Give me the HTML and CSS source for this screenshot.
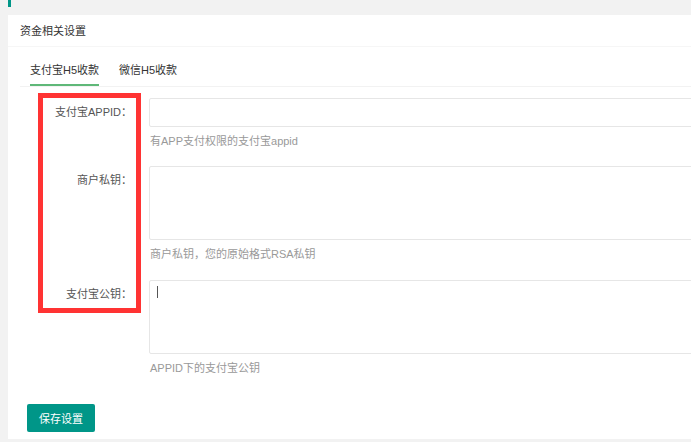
FILE: index.html
```html
<!DOCTYPE html>
<html lang="zh-CN">
<head>
    <meta charset="UTF-8">
    <meta name="viewport" content="width=device-width, initial-scale=1.0">
    <title>资金相关设置</title>
    <link rel="stylesheet" href="styles.css">
</head>
<body>

<div class="quote-edge"></div>

<div class="card">
    <div class="card-header">资金相关设置</div>

    <div class="card-body">
        <ul class="tab-title">
            <li class="tab-this">支付宝H5收款</li>
            <li>微信H5收款</li>
        </ul>

        <form class="form">
            <div class="form-item">
                <label class="form-label">支付宝APPID：</label>
                <div class="input-block">
                    <input type="text" class="input">
                    <div class="form-mid">有APP支付权限的支付宝appid</div>
                </div>
            </div>

            <div class="form-item">
                <label class="form-label">商户私钥：</label>
                <div class="input-block">
                    <textarea class="textarea"></textarea>
                    <div class="form-mid">商户私钥，您的原始格式RSA私钥</div>
                </div>
            </div>

            <div class="form-item">
                <label class="form-label">支付宝公钥：</label>
                <div class="input-block">
                    <div class="textarea-wrap">
                        <textarea class="textarea"></textarea>
                        <span class="caret"></span>
                    </div>
                    <div class="form-mid">APPID下的支付宝公钥</div>
                </div>
            </div>

            <button type="button" class="btn">保存设置</button>
        </form>
    </div>

    <!-- annotation box drawn over the labels -->
    <div class="mark"></div>
</div>

</body>
</html>
```

FILE: styles.css
```css
html, body {
    overflow: hidden;
}

body {
    margin: 0;
    background-color: #f2f2f2;
    font-family: "Liberation Sans", "Noto Sans CJK SC", sans-serif;
    font-size: 11px;
    color: #333;
}

.quote-edge {
    width: 3px;
    height: 7px;
    margin-left: 8px;
    background-color: #009688;
}

.card {
    position: relative;
    margin: 8px -40px 0 8px;
    background: #fff;
    height: 424px;
}

.card-header {
    height: 32px;
    line-height: 33px;
    padding-left: 12px;
    border-bottom: 1px solid #f6f6f6;
    box-sizing: border-box;
    color: #333;
}

.card-body {
    padding: 8px 0 0 12px;
}

.tab-title {
    list-style: none;
    margin: 0;
    padding: 0 0 0 10px;
    height: 31px;
    border-bottom: 1px solid #f2f2f2;
    display: flex;
    gap: 20px;
}

.tab-title li {
    line-height: 31px;
    height: 31px;
    box-sizing: border-box;
    color: #333;
}

.tab-title .tab-this {
    border-bottom: 2px solid #5fb878;
}

.form {
    padding-top: 11px;
}

.form-item {
    display: flex;
    margin-bottom: 17px;
}

.form-item + .form-item {
    margin-bottom: 18px;
}

.form-label {
    width: 129px;
    box-sizing: border-box;
    padding-right: 17px;
    text-align: right;
    line-height: 29px;
    color: #555;
}

.input-block {
    flex: 1;
}

.input,
.textarea {
    display: block;
    width: 100%;
    box-sizing: border-box;
    border: 1px solid #e6e6e6;
    border-radius: 2px;
    background: #fff;
    margin: 0;
    outline: none;
    font: inherit;
}

.input {
    height: 29px;
}

.textarea {
    height: 74px;
    resize: none;
}

.textarea-wrap {
    position: relative;
}

.caret {
    position: absolute;
    left: 8px;
    top: 6px;
    width: 1px;
    height: 12px;
    background-color: #555;
}

.form-mid {
    margin-top: 6px;
    line-height: 16px;
    color: #999;
    padding-left: 1px;
}

.btn {
    display: block;
    margin: 28px 0 0 7px;
    height: 28px;
    padding: 0 12px;
    border: none;
    border-radius: 2px;
    background-color: #009688;
    color: #fff;
    font: inherit;
    cursor: pointer;
}

.mark {
    position: absolute;
    left: 30px;
    top: 78px;
    width: 103px;
    height: 220px;
    box-sizing: border-box;
    border: 5px solid #f33;
}
```
